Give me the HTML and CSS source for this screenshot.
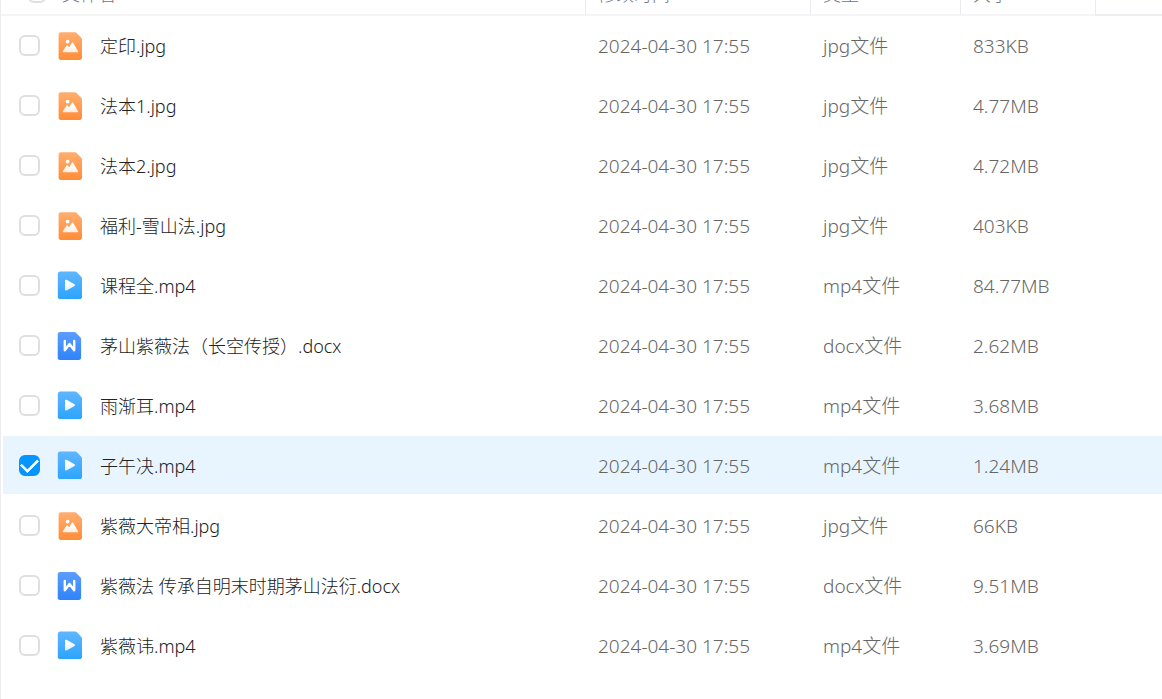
FILE: index.html
```html
<!DOCTYPE html>
<html lang="zh-CN">
<head>
    <meta charset="UTF-8">
    <title>文件列表</title>
    <link rel="stylesheet" href="styles.css">
</head>
<body>
    <!-- file type icons -->
    <svg class="icon-defs" aria-hidden="true">
        <defs>
            <linearGradient id="orange" x1="0" y1="0" x2="0" y2="1">
                <stop offset="0" stop-color="#ffae70"/>
                <stop offset="1" stop-color="#ff8d38"/>
            </linearGradient>
            <linearGradient id="sky" x1="0" y1="0" x2="0" y2="1">
                <stop offset="0" stop-color="#60b6ff"/>
                <stop offset="1" stop-color="#2ca4ff"/>
            </linearGradient>
            <linearGradient id="blue" x1="0" y1="0" x2="0" y2="1">
                <stop offset="0" stop-color="#5c9dff"/>
                <stop offset="1" stop-color="#3083fa"/>
            </linearGradient>
            <linearGradient id="fade" x1="0" y1="0" x2="0" y2="1">
                <stop offset="0.4" stop-color="#fff"/>
                <stop offset="1" stop-color="#fff" stop-opacity="0.8"/>
            </linearGradient>
        </defs>
        <symbol id="icon-image" viewBox="0 0 30 30">
            <path fill="url(#orange)" d="M5.8 2.3h14.4c.6 0 1 .2 1.4.6l4.8 5c.4.4.6.9.6 1.4v18.500c0 1.200-.9 2.200-2.200 2.200h-19c-1.300 0-2.200-1-2.200-2.200V4.500c0-1.200.9-2.200 2.200-2.200z"/>
            <circle cx="12.6" cy="11.6" r="1.900" fill="#fff"/>
            <path fill="url(#fade)" d="M8.600 22.200c-.7 0-1.100-.7-.7-1.300l3.600-5.200c.4-.5 1-.5 1.400 0l1.200 1.600 2.700-4.300c.4-.6 1.100-.6 1.500 0l4.600 7.900c.3.6 0 1.300-.7 1.300z"/>
        </symbol>
        <symbol id="icon-video" viewBox="0 0 30 30">
            <path fill="url(#sky)" d="M5 1.500h15.300c.6 0 1 .2 1.400.6l4.700 4.800c.4.4.6.9.6 1.400v18.600c0 1.200-.9 2.200-2.200 2.200H5c-1.200 0-2.200-1-2.200-2.200V3.700c0-1.200 1-2.200 2.200-2.200z"/>
            <path fill="url(#fade)" d="M10 10.700c0-.8.8-1.300 1.500-.9l8 4.500c.7.4.7 1.300 0 1.700l-8 4.400c-.7.4-1.500 0-1.500-.8z"/>
        </symbol>
        <symbol id="icon-word" viewBox="0 0 30 30">
            <path fill="url(#blue)" d="M4.900 2h14.400c.6 0 1 .2 1.400.6l4.800 4.900c.4.4.6.9.6 1.400v18.900c0 1.200-.9 2.200-2.200 2.200h-19c-1.200 0-2.200-1-2.200-2.200V4.200C2.700 3 3.700 2 4.900 2z"/>
            <path fill="none" stroke="#fff" stroke-width="2.400" stroke-linecap="round" stroke-linejoin="round" d="M9.800 11v9.300l4.700-6.300 4.700 6.300V11"/>
        </symbol>
    </svg>

    <main class="file-list">
        <table class="file-table">
            <colgroup>
                <col>
                <col class="col-time">
                <col class="col-type">
                <col class="col-size">
                <col class="col-more">
            </colgroup>
            <thead>
                <tr>
                    <th>
                        <div class="head-cell">
                            <input type="checkbox" id="all">
                            <label for="all">文件名</label>
                        </div>
                    </th>
                    <th>修改时间</th>
                    <th>类型</th>
                    <th>大小</th>
                    <th></th>
                </tr>
            </thead>
            <tbody>
                <tr>
                    <td>
                        <div class="name-cell">
                            <input type="checkbox" id="f1">
                            <svg class="icon"><use href="#icon-image"/></svg>
                            <label for="f1">定印.jpg</label>
                        </div>
                    </td>
                    <td>2024-04-30 17:55</td>
                    <td>jpg文件</td>
                    <td>833KB</td>
                    <td></td>
                </tr>
                <tr>
                    <td>
                        <div class="name-cell">
                            <input type="checkbox" id="f2">
                            <svg class="icon"><use href="#icon-image"/></svg>
                            <label for="f2">法本1.jpg</label>
                        </div>
                    </td>
                    <td>2024-04-30 17:55</td>
                    <td>jpg文件</td>
                    <td>4.77MB</td>
                    <td></td>
                </tr>
                <tr>
                    <td>
                        <div class="name-cell">
                            <input type="checkbox" id="f3">
                            <svg class="icon"><use href="#icon-image"/></svg>
                            <label for="f3">法本2.jpg</label>
                        </div>
                    </td>
                    <td>2024-04-30 17:55</td>
                    <td>jpg文件</td>
                    <td>4.72MB</td>
                    <td></td>
                </tr>
                <tr>
                    <td>
                        <div class="name-cell">
                            <input type="checkbox" id="f4">
                            <svg class="icon"><use href="#icon-image"/></svg>
                            <label for="f4">福利-雪山法.jpg</label>
                        </div>
                    </td>
                    <td>2024-04-30 17:55</td>
                    <td>jpg文件</td>
                    <td>403KB</td>
                    <td></td>
                </tr>
                <tr>
                    <td>
                        <div class="name-cell">
                            <input type="checkbox" id="f5">
                            <svg class="icon"><use href="#icon-video"/></svg>
                            <label for="f5">课程全.mp4</label>
                        </div>
                    </td>
                    <td>2024-04-30 17:55</td>
                    <td>mp4文件</td>
                    <td>84.77MB</td>
                    <td></td>
                </tr>
                <tr>
                    <td>
                        <div class="name-cell">
                            <input type="checkbox" id="f6">
                            <svg class="icon"><use href="#icon-word"/></svg>
                            <label for="f6">茅山紫薇法（长空传授）.docx</label>
                        </div>
                    </td>
                    <td>2024-04-30 17:55</td>
                    <td>docx文件</td>
                    <td>2.62MB</td>
                    <td></td>
                </tr>
                <tr>
                    <td>
                        <div class="name-cell">
                            <input type="checkbox" id="f7">
                            <svg class="icon"><use href="#icon-video"/></svg>
                            <label for="f7">雨渐耳.mp4</label>
                        </div>
                    </td>
                    <td>2024-04-30 17:55</td>
                    <td>mp4文件</td>
                    <td>3.68MB</td>
                    <td></td>
                </tr>
                <tr class="selected">
                    <td>
                        <div class="name-cell">
                            <input type="checkbox" id="f8" checked>
                            <svg class="icon"><use href="#icon-video"/></svg>
                            <label for="f8">子午决.mp4</label>
                        </div>
                    </td>
                    <td>2024-04-30 17:55</td>
                    <td>mp4文件</td>
                    <td>1.24MB</td>
                    <td></td>
                </tr>
                <tr>
                    <td>
                        <div class="name-cell">
                            <input type="checkbox" id="f9">
                            <svg class="icon"><use href="#icon-image"/></svg>
                            <label for="f9">紫薇大帝相.jpg</label>
                        </div>
                    </td>
                    <td>2024-04-30 17:55</td>
                    <td>jpg文件</td>
                    <td>66KB</td>
                    <td></td>
                </tr>
                <tr>
                    <td>
                        <div class="name-cell">
                            <input type="checkbox" id="f10">
                            <svg class="icon"><use href="#icon-word"/></svg>
                            <label for="f10">紫薇法 传承自明末时期茅山法衍.docx</label>
                        </div>
                    </td>
                    <td>2024-04-30 17:55</td>
                    <td>docx文件</td>
                    <td>9.51MB</td>
                    <td></td>
                </tr>
                <tr>
                    <td>
                        <div class="name-cell">
                            <input type="checkbox" id="f11">
                            <svg class="icon"><use href="#icon-video"/></svg>
                            <label for="f11">紫薇讳.mp4</label>
                        </div>
                    </td>
                    <td>2024-04-30 17:55</td>
                    <td>mp4文件</td>
                    <td>3.69MB</td>
                    <td></td>
                </tr>
            </tbody>
        </table>
    </main>
</body>
</html>
```
FILE: styles.css
```css
* {
    box-sizing: border-box;
}
body {
    margin: 0;
    background: #fff;
    color: #666;
    font-family: "Noto Sans", "Noto Sans CJK SC", sans-serif;
    font-size: 18px;
    font-weight: 300;
    line-height: 24px;
}
.icon-defs {
    position: absolute;
    width: 0;
    height: 0;
}
.file-list {
    height: 100vh;
    overflow: hidden;
    border-left: 1px solid #ededf0;
}
/* the list is scrolled a little, so the header is partly out of view */
.file-table {
    width: 100%;
    margin-top: -25px;
    border-collapse: separate;
    border-spacing: 0;
    table-layout: fixed;
}
.col-time {
    width: 225px;
}
.col-type {
    width: 150px;
}
.col-size {
    width: 135px;
}
.col-more {
    width: 67px;
}
th {
    height: 41px;
    padding: 0 0 2px 12px;
    border-left: 1px solid #ebebef;
    border-bottom: 2px solid #f5f5f7;
    color: #71737d;
    font-weight: 300;
    text-align: left;
}
th:first-child {
    padding-left: 27px;
    border-left: none;
}
th:last-child {
    border-bottom-color: #ededf2;
}
td {
    height: 60px;
    padding: 2px 0 0 13px;
    border-bottom: 2px solid #fff;
    font-size: 19px;
}
td:first-child {
    padding: 0 0 0 16px;
    border-left: 2px solid #fff;
    font-size: 18px;
}
.selected td {
    background: #e8f5ff;
}
.head-cell {
    display: flex;
    align-items: center;
    gap: 16px;
}
.name-cell {
    display: flex;
    align-items: center;
    gap: 15px;
    color: #222;
    white-space: nowrap;
}
.name-cell label {
    padding-top: 2px;
}
.icon {
    flex: none;
    width: 30px;
    height: 30px;
}
input[type="checkbox"] {
    appearance: none;
    flex: none;
    display: grid;
    place-items: center;
    width: 21px;
    height: 21px;
    margin: 0;
    border: 2px solid #dfdfdf;
    border-radius: 6px;
    background: #fff;
    cursor: pointer;
}
.head-cell input[type="checkbox"] {
    width: 18px;
    height: 18px;
}
input[type="checkbox"]:checked {
    border-color: #0595ff;
    background: #0595ff;
}
input[type="checkbox"]:checked::before {
    content: "";
    width: 14px;
    height: 8px;
    margin-bottom: 4px;
    border-left: 3px solid #fff;
    border-bottom: 3px solid #fff;
    border-radius: 1px;
    transform: rotate(-45deg);
}
```
